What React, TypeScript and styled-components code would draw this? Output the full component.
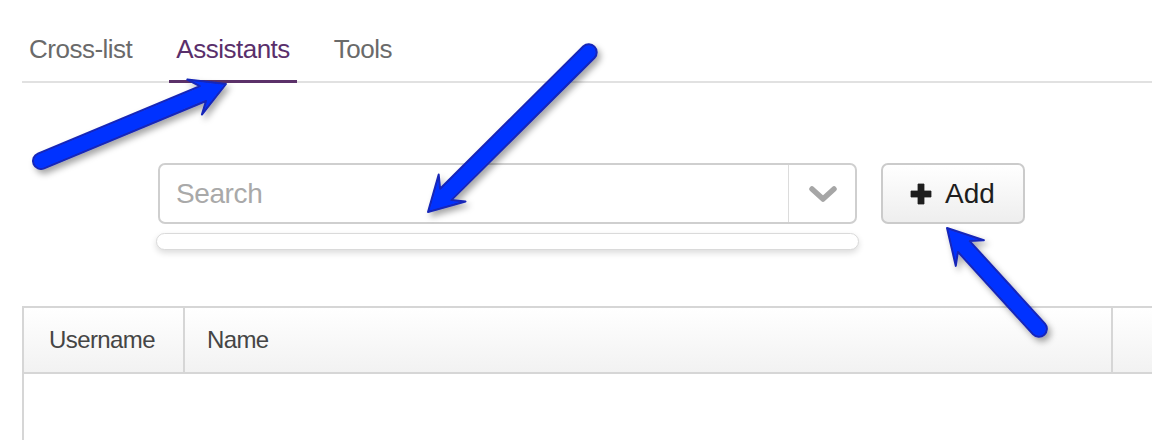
import React from "react";
import styled, { createGlobalStyle } from "styled-components";

const Global = createGlobalStyle`
  html, body { margin: 0; padding: 0; background: #fff; }
  body { font-family: "Liberation Sans", Arial, Helvetica, sans-serif; overflow: hidden; }
`;

const Page = styled.div`
  position: relative;
  width: 1152px;
  height: 440px;
  overflow: hidden;
  background: #fff;
`;

const TabBar = styled.nav`
  display: flex;
  gap: 30px;
  margin-left: 22px;
  border-bottom: 2px solid #e1e1e1;
`;

const Tab = styled.div<{ $active?: boolean }>`
  padding: 36px 7px 18px;
  margin-bottom: -2px;
  font-size: 26px;
  line-height: 26px;
  letter-spacing: -0.5px;
  color: ${(p) => (p.$active ? "#5a2f6b" : "#6a6a6a")};
  border-bottom: 3px solid ${(p) => (p.$active ? "#5b3169" : "transparent")};
`;

const SearchRow = styled.div`
  display: flex;
  align-items: flex-start;
  gap: 24px;
  margin-top: 80px;
  padding-left: 158px;
`;

const SearchColumn = styled.div`
  display: flex;
  flex-direction: column;
  gap: 9px;
  width: 699px;
`;

const SearchBox = styled.div`
  display: flex;
  height: 61px;
  box-sizing: border-box;
  border: 2px solid #cfcfcf;
  border-radius: 7px;
  background: #fff;
`;

const SearchInput = styled.div`
  flex: 1;
  display: flex;
  align-items: center;
  padding-left: 16px;
  font-size: 28px;
  letter-spacing: -0.4px;
  color: #a9a9a9;
`;

const Toggle = styled.div`
  width: 64px;
  display: flex;
  align-items: center;
  justify-content: center;
  padding-left: 2px;
  border-left: 1px solid #dcdcdc;
`;

const Menu = styled.div`
  height: 17px;
  margin: 0 -2px;
  box-sizing: border-box;
  border: 1px solid #dadada;
  border-radius: 9px;
  background: #fff;
  box-shadow: 0 3px 6px rgba(0, 0, 0, 0.14);
`;

const AddButton = styled.div`
  display: flex;
  align-items: center;
  gap: 13px;
  height: 61px;
  box-sizing: border-box;
  padding: 0 28px 0 27px;
  border: 2px solid #cbcbcb;
  border-radius: 7px;
  background: linear-gradient(#ffffff, #eeeeee);
  font-size: 28px;
  color: #1e1e1e;
`;

const PlusIcon = styled.svg`
  flex-shrink: 0;
  display: block;
`;

const Table = styled.div`
  margin: 56px 0 0 22px;
  width: 1200px;
  height: 200px;
  border-left: 2px solid #d6d6d6;
`;

const HeaderRow = styled.div`
  display: grid;
  grid-template-columns: 159px 928px 1fr;
  height: 68px;
  box-sizing: border-box;
  border-top: 2px solid #d6d6d6;
  border-bottom: 2px solid #d6d6d6;
  background: linear-gradient(#ffffff, #f2f2f2);
`;

const HeaderCell = styled.div<{ $pad: number }>`
  display: flex;
  align-items: center;
  padding-left: ${(p) => p.$pad}px;
  font-size: 24px;
  letter-spacing: -0.6px;
  color: #454545;
  & + & {
    border-left: 2px solid #d6d6d6;
  }
`;

const Overlay = styled.svg`
  position: absolute;
  left: 0;
  top: 0;
  pointer-events: none;
`;

type Pt = [number, number];

function arrowPath(t: Pt, p: Pt, w: number, hl: number, hw: number, notch: number) {
  const dx = p[0] - t[0];
  const dy = p[1] - t[1];
  const len = Math.hypot(dx, dy);
  const ux = dx / len;
  const uy = dy / len;
  const nx = -uy;
  const ny = ux;
  const bx = p[0] - ux * hl;
  const by = p[1] - uy * hl;
  const r = w / 2;
  const f = (x: number, y: number) => `${x.toFixed(1)} ${y.toFixed(1)}`;
  const tl = f(t[0] + nx * r, t[1] + ny * r);
  const nl = f(bx + ux * notch + nx * r, by + uy * notch + ny * r);
  const bl = f(bx + nx * hw, by + ny * hw);
  const tip = f(p[0], p[1]);
  const br = f(bx - nx * hw, by - ny * hw);
  const nr = f(bx + ux * notch - nx * r, by + uy * notch - ny * r);
  const tr = f(t[0] - nx * r, t[1] - ny * r);
  return `M ${tl} L ${nl} L ${bl} L ${tip} L ${br} L ${nr} L ${tr} A ${r} ${r} 0 0 0 ${tl} Z`;
}

const arrows: { t: Pt; p: Pt }[] = [
  { t: [41, 161], p: [226, 84] },
  { t: [589, 52], p: [428, 212] },
  { t: [1039, 329], p: [947, 228] },
];

export default function App() {
  return (
    <Page>
      <Global />
      <TabBar>
        <Tab>Cross-list</Tab>
        <Tab $active>Assistants</Tab>
        <Tab>Tools</Tab>
      </TabBar>

      <SearchRow>
        <SearchColumn>
          <SearchBox>
            <SearchInput>Search</SearchInput>
            <Toggle>
              <svg width="28" height="18" viewBox="0 0 28 18">
                <polyline
                  points="3,4 14,14 25,4"
                  fill="none"
                  stroke="#a6a6a6"
                  strokeWidth="5.5"
                  strokeLinecap="round"
                  strokeLinejoin="round"
                />
              </svg>
            </Toggle>
          </SearchBox>
          <Menu />
        </SearchColumn>
        <AddButton>
          <PlusIcon width="22" height="22" viewBox="0 0 22 22">
            <path
              d="M8 1 h6 v7 h7 v6 h-7 v7 h-6 v-7 h-7 v-6 h7 z"
              fill="#1e1e1e"
              stroke="#1e1e1e"
              strokeWidth="0.8"
              strokeLinejoin="round"
            />
          </PlusIcon>
          Add
        </AddButton>
      </SearchRow>

      <Table>
        <HeaderRow>
          <HeaderCell $pad={25}>Username</HeaderCell>
          <HeaderCell $pad={22}>Name</HeaderCell>
          <HeaderCell $pad={20} />
        </HeaderRow>
      </Table>

      <Overlay width="1152" height="440" viewBox="0 0 1152 440">
        <defs>
          <filter id="sh" x="-20%" y="-20%" width="140%" height="140%">
            <feDropShadow dx="3" dy="4" stdDeviation="3" floodColor="#000" floodOpacity="0.35" />
          </filter>
        </defs>
        {arrows.map((a, i) => (
          <path
            key={i}
            d={arrowPath(a.t, a.p, 16, 34, 19, 9)}
            fill="#0433ff"
            stroke="#1626b8"
            strokeWidth="2"
            strokeLinejoin="round"
            filter="url(#sh)"
          />
        ))}
      </Overlay>
    </Page>
  );
}
